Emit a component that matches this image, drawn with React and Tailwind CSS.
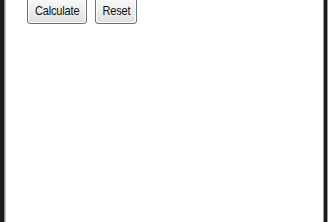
export default function App() {
  const btn =
    "flex items-center justify-center h-[27px] rounded-[3px] border border-[#707070] bg-gradient-to-b from-[#fafafa] to-[#e0e0e0] text-[13px] leading-none text-[#111] shadow-[inset_0_0_0_1px_#fdfdfd]";
  return (
    <div className="flex h-[222px] w-[333px] bg-white" style={{ fontFamily: '"Liberation Sans", Arial, sans-serif' }}>
      <div className="w-[4px] bg-[#1c1c1c]" />
      <div className="w-[1px] bg-[#8a8a8a]" />
      <div className="w-[1px] bg-[#c8c8c8]" />
      <div className="flex-1 bg-white">
        <div className="mt-[-3px] flex gap-[8px] pl-[21px]">
          <button className={`${btn} w-[60px]`}>
            <span className="inline-block scale-x-[0.85] tracking-[-0.2px]">Calculate</span>
          </button>
          <button className={`${btn} w-[42px]`}>
            <span className="inline-block scale-x-[0.85] tracking-[-0.2px]">Reset</span>
          </button>
        </div>
      </div>
      <div className="w-[1px] bg-[#9a9a9a]" />
      <div className="w-[3px] bg-[#1c1c1c]" />
      <div className="w-[1px] bg-[#9a9a9a]" />
      <div className="w-[5px] bg-white" />
    </div>
  );
}
